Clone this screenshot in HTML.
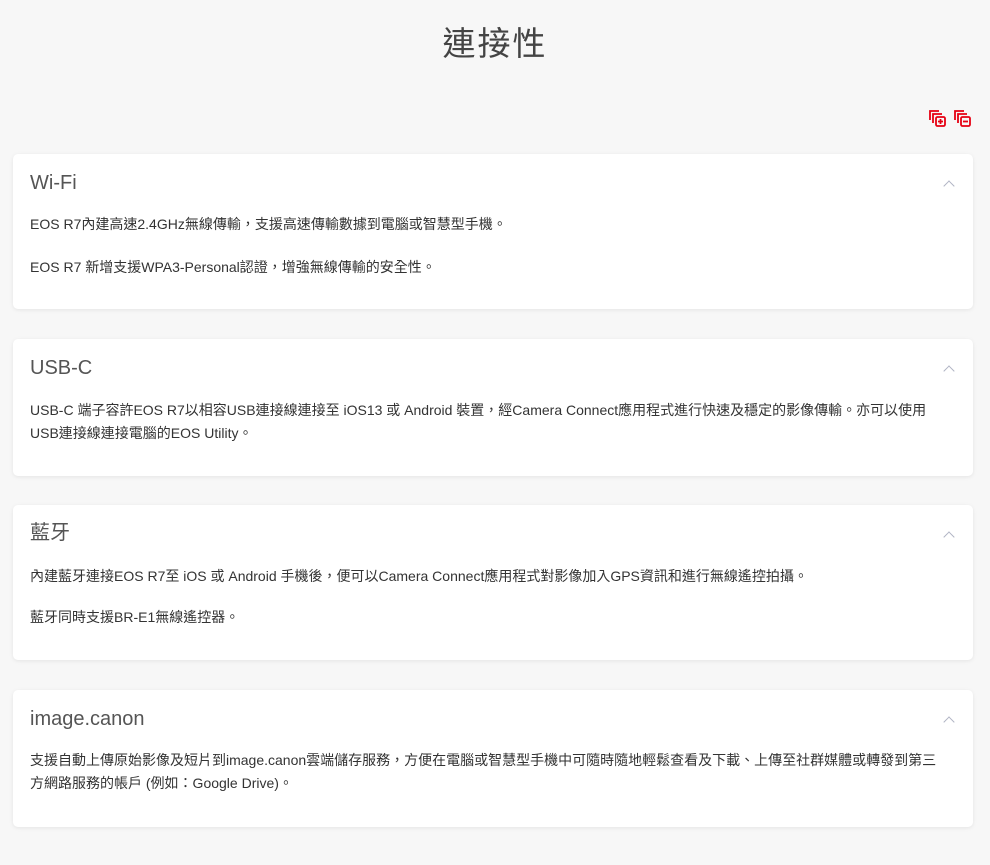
<!DOCTYPE html>
<html><head><meta charset="utf-8"><style>
body{margin:0;background:#f7f7f7;font-family:"Liberation Sans","Noto Sans CJK TC",sans-serif;width:990px;height:865px;overflow:hidden;position:relative}
h1{position:absolute;top:18px;left:0;width:990px;text-align:center;margin:0;font-weight:400;font-size:33px;color:#444;line-height:52px;letter-spacing:2px}
.icons{position:absolute;top:108px;left:928px}
.card{position:absolute;left:13px;width:960px;background:#fff;border-radius:5px;box-shadow:0 1px 4px rgba(0,0,0,.08)}
.card h2{position:absolute;left:17px;margin:0;font-weight:400;font-size:20px;color:#555;line-height:28px}
.card p{position:absolute;left:17px;width:930px;margin:0;font-size:14px;color:#333;line-height:23px;white-space:nowrap}
.chev{position:absolute;right:20px;width:7px;height:7px;border-left:1.6px solid #b0b4c4;border-top:1.6px solid #b0b4c4;transform:rotate(45deg)}
</style></head><body>
<h1>連接性</h1>
<div class="icons">
<svg width="46" height="20" viewBox="0 0 46 20" fill="none" stroke="#e60012" stroke-width="1.8">
<path d="M2 12V3h9"/><path d="M5 15V6h9"/><rect x="8" y="9" width="9" height="9" rx="1.5"/><path d="M12.5 11v5M10 13.5h5"/>
<path d="M27 12V3h9"/><path d="M30 15V6h9"/><rect x="33" y="9" width="9" height="9" rx="1.5"/><path d="M35 13.5h5"/>
</svg></div>

<div class="card" style="top:154px;height:155px">
<h2 style="top:15px">Wi-Fi</h2><div class="chev" style="top:28px"></div>
<p style="top:59px">EOS R7內建高速2.4GHz無線傳輸，支援高速傳輸數據到電腦或智慧型手機。</p>
<p style="top:102px">EOS R7 新增支援WPA3-Personal認證，增強無線傳輸的安全性。</p>
</div>

<div class="card" style="top:339px;height:137px">
<h2 style="top:15px">USB-C</h2><div class="chev" style="top:28px"></div>
<p style="top:60px">USB-C 端子容許EOS R7以相容USB連接線連接至 iOS13 或 Android 裝置，經Camera Connect應用程式進行快速及穩定的影像傳輸。亦可以使用<br>USB連接線連接電腦的EOS Utility。</p>
</div>

<div class="card" style="top:505px;height:155px">
<h2 style="top:14px">藍牙</h2><div class="chev" style="top:28px"></div>
<p style="top:60px">內建藍牙連接EOS R7至 iOS 或 Android 手機後，便可以Camera Connect應用程式對影像加入GPS資訊和進行無線遙控拍攝。</p>
<p style="top:101px">藍牙同時支援BR-E1無線遙控器。</p>
</div>

<div class="card" style="top:690px;height:137px">
<h2 style="top:15px">image.canon</h2><div class="chev" style="top:28px"></div>
<p style="top:59px">支援自動上傳原始影像及短片到image.canon雲端儲存服務，方便在電腦或智慧型手機中可隨時隨地輕鬆查看及下載、上傳至社群媒體或轉發到第三<br>方網路服務的帳戶 (例如：Google Drive)。</p>
</div>
</body></html>
